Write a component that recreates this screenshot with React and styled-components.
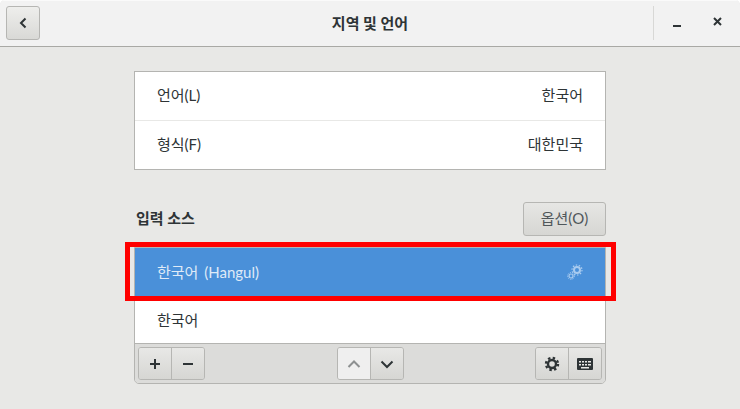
import React from 'react';
import styled, { createGlobalStyle } from 'styled-components';

const Global = createGlobalStyle`
  html, body { margin: 0; padding: 0; background: #fff; }
  body { font-family: Lato, "Noto Sans CJK KR", "Liberation Sans", sans-serif; }
`;

const Win = styled.div`
  position: relative;
  width: 740px;
  height: 409px;
  background: #e8e8e6;
  border-radius: 5px 5px 0 0;
  overflow: hidden;
  color: #2e3436;
`;

const Header = styled.header`
  height: 47px;
  box-sizing: border-box;
  display: flex;
  align-items: center;
  padding: 0 6px;
  background: #f2f2f2;
  border-bottom: 1px solid #a9a9a5;
  box-shadow: inset 0 1px 0 #fafafa;
`;

const BackButton = styled.button`
  width: 34px;
  height: 34px;
  padding: 0;
  display: flex;
  align-items: center;
  justify-content: center;
  border: 1px solid #b6b6b3;
  border-radius: 3px;
  background: linear-gradient(#eeeeec, #d9d9d6);
  color: #2e3436;
`;

const Title = styled.h1`
  flex: 1;
  margin: 0;
  text-align: center;
  font-size: 15px;
  font-weight: 700;
  line-height: 20px;
  color: #2e3436;
  padding-left: 47px;
`;

const WinControls = styled.div`
  display: flex;
  align-items: center;
  height: 34px;
  border-left: 1px solid #d8d8d6;
  width: 81px;
  justify-content: space-between;
  padding: 0 8px 2px 16px;
  box-sizing: border-box;
`;

const Content = styled.main`
  width: 472px;
  margin: 0 auto;
  padding-top: 24px;
`;

const Panel = styled.div`
  background: #fff;
  border: 1px solid #b4b4b1;
`;

const Row = styled.div`
  height: ${p => p.$h || 49}px;
  box-sizing: border-box;
  display: flex;
  align-items: center;
  justify-content: space-between;
  padding: 0 22px ${p => p.$pb ?? 3}px;
  font-size: 15px;
  color: ${p => (p.$selected ? '#dfeaf7' : '#2e3436')};
  word-spacing: ${p => (p.$selected ? '2px' : '0')};
  background: ${p => (p.$selected ? '#4a90d9' : '#fff')};
  & + & { border-top: 1px solid #e8e8e6; }
`;

const SectionHead = styled.div`
  display: flex;
  align-items: center;
  justify-content: space-between;
  height: 34px;
  margin: 32px 0 11px;
  padding-left: 2px;
`;

const SectionTitle = styled.span`
  font-size: 15px;
  font-weight: 700;
  position: relative;
  top: -2px;
`;

const OptionButton = styled.button`
  width: 83px;
  height: 34px;
  padding: 0 0 4px;
  border: 1px solid #b6b6b3;
  border-radius: 3px;
  background: linear-gradient(#e6e6e4, #d6d6d3);
  color: #50575a;
  font: 15px Lato, "Noto Sans CJK KR", "Liberation Sans", sans-serif;
`;

const ListFrame = styled.div`
  border: 1px solid #b4b4b1;
  border-radius: 0 0 5px 5px;
  overflow: hidden;
`;

const Toolbar = styled.div`
  height: 40px;
  box-sizing: border-box;
  display: flex;
  align-items: center;
  justify-content: space-between;
  padding: 0 3px;
  background: #dcdcda;
  border-top: 1px solid #b4b4b1;
`;

const Group = styled.div`
  display: flex;
  width: 67px;
  box-sizing: border-box;
  height: 33px;
  border: 1px solid #b6b6b3;
  border-radius: 3px;
  overflow: hidden;
`;

const ToolButton = styled.button`
  flex: 1;
  padding: 0;
  display: flex;
  align-items: center;
  justify-content: center;
  border: 0;
  background: ${p => (p.$off ? '#efefef' : 'linear-gradient(#e8e8e6, #d6d6d3)')};
  color: ${p => (p.$off ? '#8d9091' : '#2e3436')};
  & + & { border-left: 1px solid #b6b6b3; }
`;

const Highlight = styled.div`
  position: absolute;
  left: 125px;
  top: 242px;
  width: 481px;
  height: 49px;
  border: 5px solid #ff0000;
  pointer-events: none;
`;

const Chevron = ({ d, w = 2 }) => (
  <svg width="16" height="16" viewBox="0 0 16 16" fill="none" stroke="currentColor" strokeWidth={w}>
    <path d={d} />
  </svg>
);

const Gears = () => (
  <svg width="16" height="16" viewBox="0 0 16 16" fill="none" stroke="#a9cbef">
    <circle cx="10" cy="6" r="3" strokeWidth="2" />
    <circle cx="10" cy="6" r="5" strokeWidth="1.2" strokeDasharray="1.5 1.6" />
    <circle cx="4" cy="12" r="2" strokeWidth="1.2" />
    <circle cx="4" cy="12" r="3.4" strokeWidth="1" strokeDasharray="1.2 1.2" />
  </svg>
);

const Gear = () => (
  <svg width="16" height="16" viewBox="0 0 16 16" fill="none" stroke="currentColor">
    <circle cx="8" cy="8" r="4" strokeWidth="2.4" />
    <circle cx="8" cy="8" r="6" strokeWidth="2.4" strokeDasharray="2.4 2.31" />
  </svg>
);

const Keyboard = () => (
  <svg width="16" height="12" viewBox="0 0 16 12">
    <rect width="16" height="12" rx="1" fill="currentColor" />
    <path d="M2 3h2v1.5H2zM5 3h2v1.5H5zM8 3h2v1.5H8zM11 3h3v1.5h-3zM2 6h2v1.5H2zM5 6h2v1.5H5zM8 6h2v1.5H8zM11 6h3v1.5h-3zM4 9h8v1.5H4z" fill="#e8e8e6" />
  </svg>
);

export default function App() {
  return (
    <Win>
      <Global />
      <Header>
        <BackButton aria-label="back">
          <Chevron d="M10.5 3.5 6 8l4.5 4.5" />
        </BackButton>
        <Title>지역 및 언어</Title>
        <WinControls>
          <Chevron d="M3 12h8" />
          <Chevron d="M4 4l7 7M11 4l-7 7" />
        </WinControls>
      </Header>
      <Content>
        <Panel>
          <Row $h={48}><span>언어(L)</span><span>한국어</span></Row>
          <Row><span>형식(F)</span><span>대한민국</span></Row>
        </Panel>
        <SectionHead>
          <SectionTitle>입력 소스</SectionTitle>
          <OptionButton>옵션(O)</OptionButton>
        </SectionHead>
        <ListFrame>
          <Row $selected $h={48} $pb={1}><span>한국어 (Hangul)</span><Gears /></Row>
          <Row $h={47} $pb={2}><span>한국어</span></Row>
          <Toolbar>
            <Group>
              <ToolButton aria-label="add"><Chevron d="M8 3v10M3 8h10" /></ToolButton>
              <ToolButton aria-label="remove"><Chevron d="M3 8h10" /></ToolButton>
            </Group>
            <Group>
              <ToolButton $off aria-label="up"><Chevron d="M2.5 11 8 5.5l5.5 5.5" /></ToolButton>
              <ToolButton aria-label="down"><Chevron d="M2.5 5.5 8 11l5.5-5.5" /></ToolButton>
            </Group>
            <Group>
              <ToolButton aria-label="settings"><Gear /></ToolButton>
              <ToolButton aria-label="keyboard"><Keyboard /></ToolButton>
            </Group>
          </Toolbar>
        </ListFrame>
      </Content>
      <Highlight />
    </Win>
  );
}
